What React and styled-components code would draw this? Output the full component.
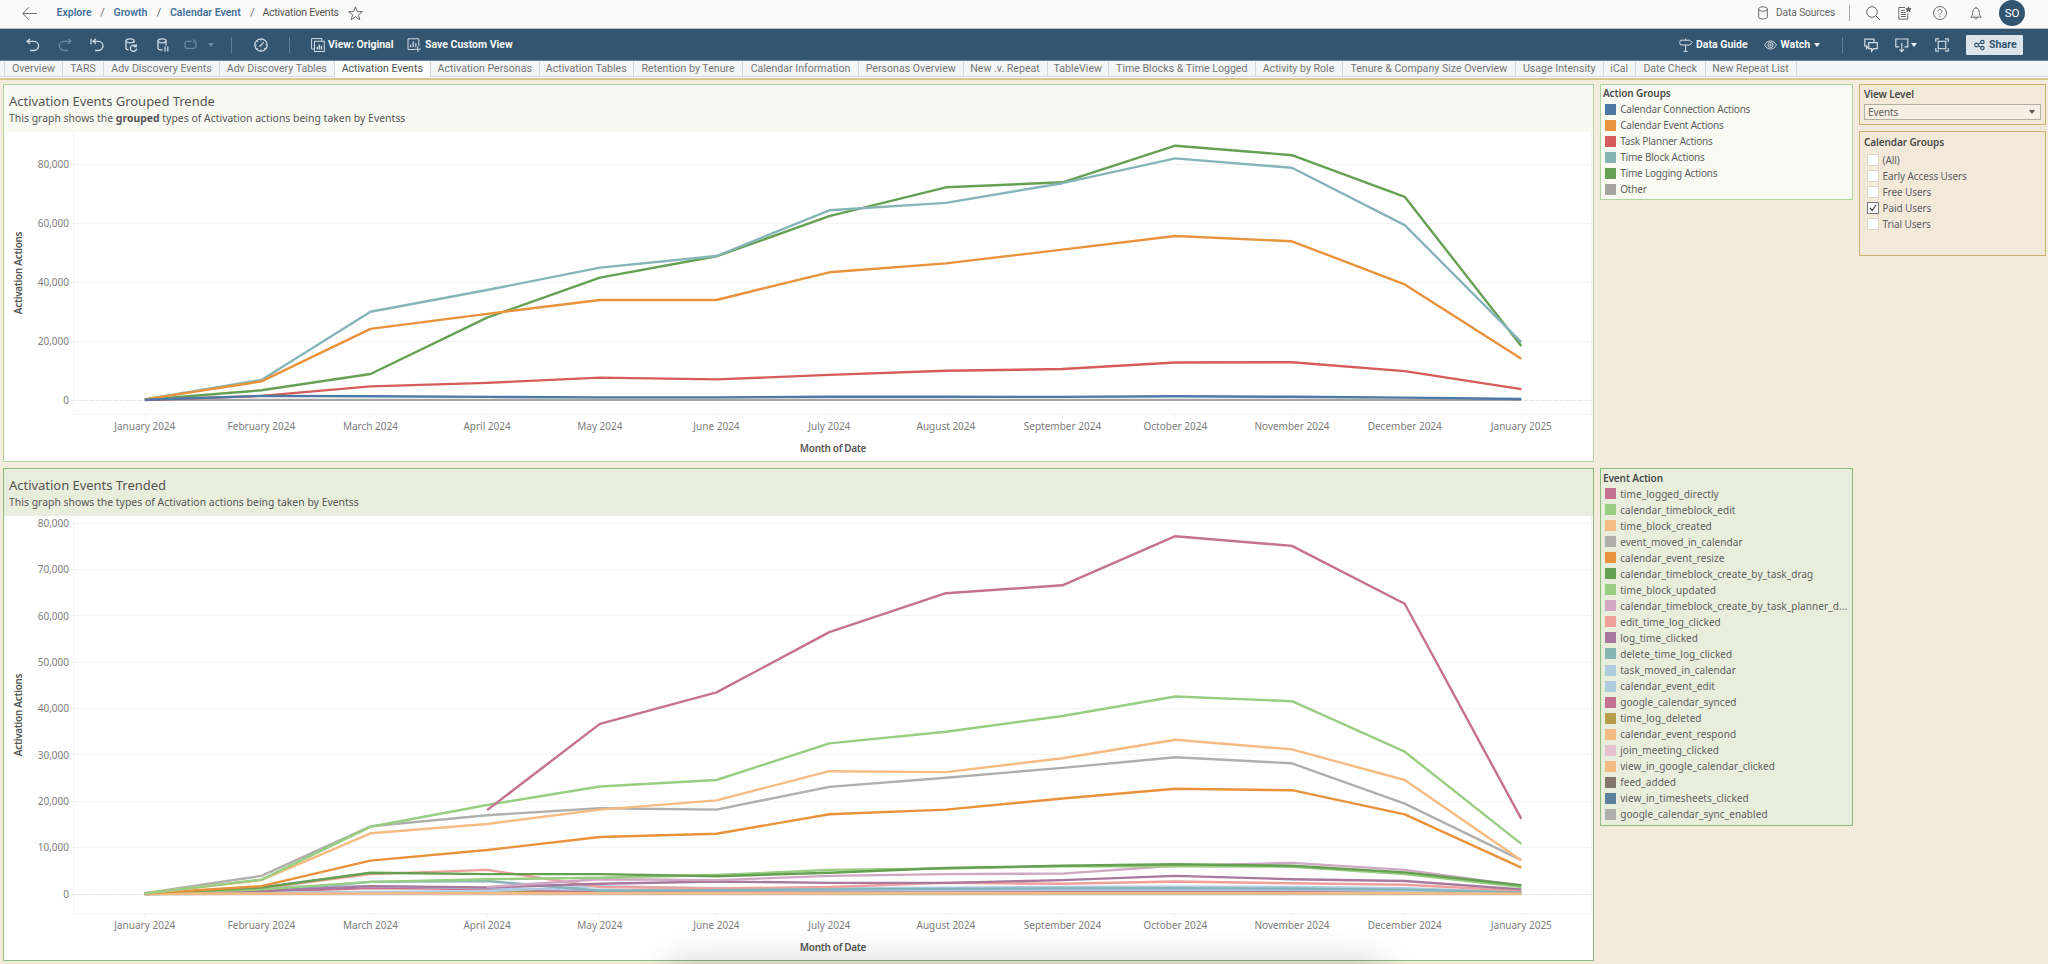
import React from "react";
import styled, { createGlobalStyle } from "styled-components";

const GlobalStyle = createGlobalStyle`
  * { box-sizing: border-box; }
  html, body { margin: 0; padding: 0; overflow: hidden; }
  body { font-family: Roboto, "Liberation Sans", sans-serif; font-size: 10px; color: #4c4c4c; }
`;

const BOOK = '"Noto Sans", "Open Sans", sans-serif';

const Page = styled.div`
  position: relative;
  width: 2048px;
  height: 964px;
  overflow: hidden;
  display: flex;
  flex-direction: column;
  background: #f3ecdd;
`;

/* ---------- top bar ---------- */
const TopBar = styled.header`
  flex: none;
  height: 29px;
  display: flex;
  align-items: center;
  padding: 0 23px 2px 22px;
  background: #fafafa;
  border-bottom: 1px solid #b3c2cd;
`;

const Glyph = styled.svg`
  flex: none;
  display: block;
  overflow: visible;
  width: ${(p) => p.$w || 14}px;
  height: 14px;
  margin-left: ${(p) => p.$ml || 0}px;
  fill: none;
  stroke: ${(p) => p.$color || "#6b6b6b"};
  stroke-width: ${(p) => p.$sw || 1}px;
`;

const Crumb = styled.span`
  flex: none;
  width: ${(p) => p.$w}px;
  margin-left: ${(p) => p.$ml}px;
  font-size: 10.5px;
  letter-spacing: ${(p) => p.$ls || 0}px;
  line-height: 14px;
  white-space: nowrap;
  font-weight: ${(p) => (p.$current ? 400 : 600)};
  color: ${(p) => (p.$current ? "#545454" : "#44709b")};
`;

const Slash = styled.span`
  flex: none;
  width: 5px;
  margin-left: 8px;
  line-height: 14px;
  font-size: 11px;
  text-align: center;
  color: #666;
`;

const Spacer = styled.div`
  flex: 1;
`;

const TopText = styled.span`
  flex: none;
  width: 59px;
  margin-left: 8px;
  font-size: 10.2px;
  letter-spacing: -0.1px;
  line-height: 14px;
  white-space: nowrap;
  color: #666;
`;

const Rule = styled.i`
  flex: none;
  width: 1px;
  height: 16px;
  margin-left: ${(p) => p.$ml}px;
  background: ${(p) => p.$color};
`;

const Avatar = styled.div`
  flex: none;
  width: 26px;
  height: 26px;
  margin-left: 17px;
  border-radius: 50%;
  background: #345570;
  color: #fff;
  font-size: 11.5px;
  line-height: 27px;
  text-align: center;
`;

/* ---------- toolbar ---------- */
const Toolbar = styled.nav`
  flex: none;
  height: 32px;
  display: flex;
  align-items: center;
  padding: 0 25px 0 26px;
  background: #345570;
  border-bottom: 1px solid #6f8799;
`;

const ToolLabel = styled.span`
  flex: none;
  width: ${(p) => p.$w}px;
  margin-left: ${(p) => p.$ml}px;
  font-size: 10.5px;
  font-weight: 700;
  letter-spacing: ${(p) => p.$ls || 0}px;
  line-height: 14px;
  white-space: nowrap;
  color: #f4f7f9;
`;

const Caret = styled.i`
  flex: none;
  width: 0;
  height: 0;
  margin-left: ${(p) => p.$ml}px;
  border-left: 3px solid transparent;
  border-right: 3px solid transparent;
  border-top: 4px solid ${(p) => p.$color};
`;

const ShareButton = styled.button`
  flex: none;
  display: flex;
  align-items: center;
  width: 57px;
  height: 20px;
  margin-left: 17px;
  padding: 0 0 0 8px;
  border: 0;
  border-radius: 1px;
  background: #dde4ea;
  color: #345570;
  font: 700 10.6px/20px Roboto, sans-serif;
  gap: 4px;
`;

/* ---------- sheet tabs ---------- */
const Tabs = styled.div`
  flex: none;
  display: flex;
  height: 17px;
  padding-left: 4px;
  background: linear-gradient(#f3f5f6 0 15px, #d5dadf 15px 16px, #ffffff 16px);
`;

const Tab = styled.div`
  flex: none;
  width: ${(p) => p.$w}px;
  height: ${(p) => (p.$active ? 17 : 15)}px;
  border-left: 1px solid #d3d8dd;
  background: ${(p) => (p.$active ? "#ffffff" : "transparent")};
  color: ${(p) => (p.$active ? "#4f4f4f" : "#777")};
  font-size: 10.6px;
  line-height: 16px;
  text-align: center;
  white-space: nowrap;
`;

const TabsEnd = styled.i`
  width: 1px;
  height: 15px;
  background: #d3d8dd;
`;

/* ---------- dashboard ---------- */
const Dashboard = styled.main`
  flex: 1;
  display: grid;
  grid-template-columns: 1591px 253px 187px;
  column-gap: 6px;
  padding: 4px 0 0 3px;
  border-top: 2px solid #d9c489;
`;

const Column = styled.div`
  display: flex;
  flex-direction: column;
  gap: ${(p) => p.$gap}px;
`;

const tones = {
  light: { border: "#afd69e", head: "#f8f9f1", fill: "#f9fbf3" },
  deep: { border: "#88bd7c", head: "#e9eddc", fill: "#e9eddc" },
  sand: { border: "#cbb36f", head: "#f3e9d9", fill: "#f3e9d9" },
};

const Panel = styled.section`
  height: ${(p) => p.$h}px;
  border: 1px solid ${(p) => tones[p.$tone].border};
  background: #fff;
`;

const PanelHead = styled.div`
  height: 47px;
  padding: 8px 0 0 5px;
  background: ${(p) => tones[p.$tone].head};
  font-family: ${BOOK};
  color: #555;
`;

const PanelTitle = styled.div`
  font-size: 13px;
  letter-spacing: -0.03px;
  line-height: 17px;
`;

const PanelSub = styled.div`
  font-size: 10.4px;
  letter-spacing: 0.02px;
  line-height: 16px;
`;

const Plot = styled.svg`
  display: block;
  font-family: ${BOOK};
`;

const AxisLabel = styled.text`
  font-size: 10px;
  fill: #7d7d7d;
`;

const AxisTitle = styled.text`
  font-size: 10px;
  font-weight: 600;
  letter-spacing: -0.32px;
  fill: #555;
`;

const Box = styled.section`
  height: ${(p) => p.$h}px;
  margin-top: ${(p) => p.$mt || 0}px;
  padding: ${(p) => p.$pad};
  border: 1px solid ${(p) => tones[p.$tone].border};
  background: ${(p) => tones[p.$tone].fill};
  font-family: ${BOOK};
  font-size: 10px;
  letter-spacing: ${(p) => p.$ls || 0}px;
  color: #5f5f5f;
`;

const BoxTitle = styled.div`
  height: ${(p) => p.$h || 16}px;
  line-height: 16px;
  font-weight: 600;
  letter-spacing: -0.1px;
  color: #4a4a4a;
`;

const LegendRow = styled.div`
  display: flex;
  align-items: center;
  gap: 4.2px;
  height: 16.05px;
  padding-left: 2px;
  white-space: nowrap;
`;

const Swatch = styled.i`
  flex: none;
  width: 11px;
  height: 11px;
  background: ${(p) => p.$color};
`;

const Select = styled.div`
  display: flex;
  align-items: center;
  justify-content: space-between;
  height: 16px;
  margin-top: 2px;
  padding: 0 5px 0 3px;
  border: 1px solid #b5b0a6;
  background: #f7efe3;
`;

const CheckRow = styled.label`
  display: flex;
  align-items: center;
  gap: 4px;
  height: 16px;
  padding-left: 2.5px;
`;

const Check = styled.span`
  flex: none;
  width: 12px;
  height: 12px;
  border: 1px solid ${(p) => (p.$on ? "#777" : "#dcd6cc")};
  background: #fff;
`;

const CheckMark = styled.svg`
  display: block;
  width: 10px;
  height: 10px;
  fill: none;
  stroke: #444;
  stroke-width: 1.2px;
`;

const DockShadow = styled.div`
  position: absolute;
  left: 672px;
  top: 970px;
  width: 708px;
  height: 30px;
  border-radius: 14px;
  box-shadow: 0 0 34px 6px rgba(0, 0, 0, 0.22);
`;

/* ---------- data ---------- */
const TABS = [
  ["Overview", 58], ["TARS", 41], ["Adv Discovery Events", 116], ["Adv Discovery Tables", 114.5],
  ["Activation Events", 96.5], ["Activation Personas", 108.5], ["Activation Tables", 94.5],
  ["Retention by Tenure", 109], ["Calendar Information", 116], ["Personas Overview", 104.5],
  ["New .v. Repeat", 84], ["TableView", 61.5], ["Time Blocks & Time Logged", 146.5],
  ["Activity by Role", 87], ["Tenure & Company Size Overview", 173.5], ["Usage Intensity", 87.5],
  ["iCal", 32.5], ["Date Check", 69.5], ["New Repeat List", 91],
];

const MONTHS = [
  ["January 2024", 0], ["February 2024", 31], ["March 2024", 60], ["April 2024", 91],
  ["May 2024", 121], ["June 2024", 152], ["July 2024", 182], ["August 2024", 213],
  ["September 2024", 244], ["October 2024", 274], ["November 2024", 305],
  ["December 2024", 335], ["January 2025", 366],
];

const GROUPS = [
  ["Calendar Connection Actions", "#4e79a7"],
  ["Calendar Event Actions", "#e8923c"],
  ["Task Planner Actions", "#d65b5b"],
  ["Time Block Actions", "#86b5b3"],
  ["Time Logging Actions", "#66a053"],
  ["Other", "#a5a4a0"],
];

const GROUP_SERIES = [
  { color: "#a5a4a0", v: [150, 150, 150, 150, 150, 150, 150, 150, 150, 150, 150, 150, 150] },
  { color: "#66a053", v: [200, 3400, 8900, 28000, 41600, 48800, 62400, 72200, 73900, 86300, 83100, 69000, 18400] },
  { color: "#86b5b9", v: [300, 6900, 30000, 37400, 45000, 48900, 64400, 66900, 73600, 82000, 78800, 59400, 19700] },
  { color: "#d65b5b", v: [100, 1500, 4700, 5900, 7700, 7100, 8600, 10000, 10600, 12800, 12900, 9900, 3800] },
  { color: "#e8923c", v: [300, 6400, 24200, 29300, 34000, 34000, 43400, 46400, 51100, 55700, 53900, 39300, 14100] },
  { color: "#4e79a7", v: [200, 1500, 1400, 1150, 1000, 1000, 1200, 1200, 1150, 1400, 1200, 900, 450] },
];

const EVENTS = [
  ["time_logged_directly", "#c57191"],
  ["calendar_timeblock_edit", "#98cd82"],
  ["time_block_created", "#f5bb82"],
  ["event_moved_in_calendar", "#b0afab"],
  ["calendar_event_resize", "#e8923c"],
  ["calendar_timeblock_create_by_task_drag", "#659f51"],
  ["time_block_updated", "#98cd82"],
  ["calendar_timeblock_create_by_task_planner_d...", "#d0a8c3"],
  ["edit_time_log_clicked", "#f0a09b"],
  ["log_time_clicked", "#a8789f"],
  ["delete_time_log_clicked", "#86b5b3"],
  ["task_moved_in_calendar", "#aecbe0"],
  ["calendar_event_edit", "#aecbe0"],
  ["google_calendar_synced", "#c57191"],
  ["time_log_deleted", "#b69d4b"],
  ["calendar_event_respond", "#f5bb82"],
  ["join_meeting_clicked", "#e6c1d0"],
  ["view_in_google_calendar_clicked", "#f2bb84"],
  ["feed_added", "#85766c"],
  ["view_in_timesheets_clicked", "#5c829b"],
  ["google_calendar_sync_enabled", "#b0afab"],
];

const EVENT_SERIES = [
  { color: "#b0afab", v: [0, 0, 0, 0, 0, 0, 0, 0, 0, 0, 0, 0, 0] },
  { color: "#e6c1d0", v: [0, 50, 100, 150, 200, 200, 250, 250, 300, 300, 300, 250, 50] },
  { color: "#b69d4b", v: [0, 100, 250, 450, 500, 400, 400, 400, 450, 500, 450, 400, 100] },
  { color: "#c57191", v: [0, 450, 1300, 1050, 500, 500, 500, 500, 550, 600, 600, 450, 150] },
  { color: "#aecbe0", v: [50, 400, 450, 600, 1700, 1250, 1250, 1350, 1500, 1600, 1500, 1250, 400] },
  { color: "#aecbe0", v: [50, 1500, 1700, 1200, 900, 800, 800, 800, 900, 900, 900, 700, 200] },
  { color: "#f0a09b", v: [0, 1200, 4300, 5200, 1500, 1200, 1500, 2400, 2200, 2700, 2300, 2000, 700] },
  { color: "#86b5b9", v: [0, 600, 2600, 2800, 700, 850, 1000, 1100, 1200, 1250, 1150, 950, 350] },
  { color: "#a8789f", v: [50, 600, 1700, 1400, 2200, 2700, 2400, 2400, 3000, 3900, 3200, 2800, 1000] },
  { color: "#d0a8c3", v: [null, null, null, 1500, 3200, 3000, 3900, 4300, 4400, 6100, 6700, 5200, 1800] },
  { color: "#98cd82", v: [50, 1000, 2600, 3200, 3500, 4100, 5200, 5500, 6000, 6000, 5900, 4300, 1500] },
  { color: "#659f51", v: [50, 1400, 4600, 4300, 4300, 3850, 4600, 5600, 6100, 6400, 6100, 4650, 1900] },
  { color: "#f5bb82", v: [50, 100, 120, 150, 150, 150, 150, 150, 150, 180, 180, 150, 50] },
  { color: "#e8923c", v: [100, 1700, 7200, 9500, 12300, 13000, 17200, 18200, 20600, 22700, 22400, 17200, 5700] },
  { color: "#b0afab", v: [200, 3900, 14600, 17000, 18500, 18200, 23100, 25100, 27200, 29500, 28200, 19500, 7300] },
  { color: "#f5bb82", v: [100, 3000, 13100, 15100, 18200, 20200, 26500, 26300, 29300, 33300, 31200, 24600, 7300] },
  { color: "#98cd82", v: [100, 3100, 14500, 19200, 23200, 24600, 32500, 35000, 38400, 42600, 41600, 30700, 10800] },
  { color: "#c57191", v: [null, null, null, 18100, 36700, 43500, 56500, 64900, 66600, 77200, 75100, 62600, 16200] },
];

const USERS = ["(All)", "Early Access Users", "Free Users", "Paid Users", "Trial Users"];

/* ---------- chart ---------- */
const PLOT_LEFT = 70;
const PLOT_RIGHT = 1588;
const monthX = (day) => 140.8 + day * 3.761;

function TrendChart({ height, zeroY, perThousand, step, axisY, titleX = 829, midY, series }) {
  const y = (v) => zeroY - (v / 1000) * perThousand;
  const ticks = [];
  for (let t = 0; t <= 80000; t += step) ticks.push(t);
  return (
    <Plot width="1589" height={height}>
      <g stroke="#f4f4f4">
        {ticks.slice(1).map((t) => (
          <line key={t} x1={PLOT_LEFT - 3} x2={PLOT_RIGHT} y1={Math.floor(y(t)) + 0.5} y2={Math.floor(y(t)) + 0.5} />
        ))}
        <line x1={PLOT_LEFT - 0.5} x2={PLOT_LEFT - 0.5} y1="0" y2={axisY} />
        <line x1={PLOT_RIGHT - 0.5} x2={PLOT_RIGHT - 0.5} y1="0" y2={axisY} />
        <line x1={PLOT_LEFT} x2={PLOT_RIGHT} y1={axisY} y2={axisY} />
      </g>
      <line x1={PLOT_LEFT - 3} x2={PLOT_RIGHT} y1={Math.floor(zeroY) + 0.5} y2={Math.floor(zeroY) + 0.5} stroke="#e6e6e6" strokeDasharray="5 1" />
      {ticks.map((t) => (
        <AxisLabel key={t} x={65} y={y(t) + 3.6} textAnchor="end">{t.toLocaleString("en-US")}</AxisLabel>
      ))}
      {MONTHS.map(([name, day]) => (
        <g key={name}>
          <line x1={monthX(day)} x2={monthX(day)} y1={axisY} y2={axisY + 3} stroke="#eeeeee" />
          <AxisLabel x={monthX(day)} y={axisY + 15.9} textAnchor="middle">{name}</AxisLabel>
        </g>
      ))}
      {series.map((s, i) => (
        <polyline
          key={i}
          fill="none"
          stroke={s.color}
          strokeWidth="2.4"
          strokeLinejoin="round"
          points={s.v
            .map((v, m) => (v === null ? null : `${monthX(MONTHS[m][1]).toFixed(1)},${y(v).toFixed(1)}`))
            .filter(Boolean)
            .join(" ")}
        />
      ))}
      <AxisTitle x={titleX} y={axisY + 37.6} textAnchor="middle">Month of Date</AxisTitle>
      <AxisTitle transform={`translate(18.4 ${midY}) rotate(-90)`} textAnchor="middle">Activation Actions</AxisTitle>
    </Plot>
  );
}

/* ---------- icons ---------- */
const PALE = "#d0dbe3";
const DIM = "#6a8aa2";

const BackIcon = () => (
  <Glyph $w={15}><path d="M15 7.5H.8M7 1.2L.8 7.5 7 13.8" /></Glyph>
);
const StarIcon = () => (
  <Glyph $w={15} $ml={9.5}><path d="M7.5.8l1.8 4.7 5.1.2-4 3.1 1.4 4.9-4.3-2.9-4.3 2.9 1.4-4.9-4-3.1 5.1-.2z" /></Glyph>
);
const UndoIcon = () => (
  <Glyph $w={14} $color={PALE} $sw={1.3}><path d="M4 1L1 3.3 4 5.8M1.2 3.3H8a4.6 4.6 0 0 1 0 9.2H4" /></Glyph>
);
const RedoIcon = () => (
  <Glyph $w={14} $ml={18} $color={DIM} $sw={1.3}><path d="M10 1l3 2.3-3 2.5M12.8 3.3H6a4.6 4.6 0 0 0 0 9.2h4" /></Glyph>
);
const RevertIcon = () => (
  <Glyph $w={14} $ml={18} $color={PALE} $sw={1.3}><path d="M1 .8v5.4M6 1L3 3.3 6 5.800M3.200 3.300h5.200a4.600 4.600 0 0 1 0 9.200H5" /></Glyph>
);
const RefreshDataIcon = () => (
  <Glyph $w={12} $ml={20.5} $color={PALE} $sw={1.3}>
    <ellipse cx="5" cy="2.800" rx="4" ry="2" />
    <path d="M1 2.800v7.400c0 .9 1 1.400 2.500 1.600M9 2.800v2.200M10.900 8.300a3.100 3.100 0 1 0 .7 2.200M8.600 8.500h2.600V6" />
  </Glyph>
);
const PauseDataIcon = () => (
  <Glyph $w={12} $ml={20} $color={PALE} $sw={1.3}>
    <ellipse cx="5" cy="2.800" rx="4" ry="2" />
    <path d="M1 2.800v7.400c0 1.100 1.800 1.700 4.500 1.700M9 2.800v4.600M8 8.600v5M10.800 8.600v5" />
  </Glyph>
);
const AutoIcon = () => (
  <Glyph $w={13} $ml={15} $color={DIM} $sw={1.2}>
    <path d="M7.500 3.300H3A2 2 0 0 0 1 5.300v3a2 2 0 0 0 2 2h7a2 2 0 0 0 2-2V4M9 1.500l2.200 1.800L9 5.100" />
  </Glyph>
);
const GaugeIcon = () => (
  <Glyph $w={14} $ml={22} $color={PALE} $sw={1.2}>
    <circle cx="7" cy="7" r="6.200" />
    <path d="M6.300 8l3.400-3.800M5.200 7.800h2.300M7 1v1.600M1 7h1.600M13 7h-1.600M2.800 2.800l1 1M7 13v-1.400M2.800 11.200l1-1M11.200 11.200l-1-1" />
  </Glyph>
);
const ViewIcon = () => (
  <Glyph $w={14} $ml={21} $color={PALE}>
    <path d="M3.500 11H.6V.6h10.200v2.700" />
    <rect x="3.500" y="3.300" width="9.800" height="10.200" />
    <path d="M6.400 11.500V8.800M8.400 11.500v-5M10.500 11.500V8" strokeWidth="1.400" />
  </Glyph>
);
const SaveViewIcon = () => (
  <Glyph $w={14} $ml={15} $color={PALE}>
    <path d="M8 11.500H1V.8h10.800V8M10.800 8.500v5.400M8.100 11.200h5.600" />
    <path d="M3.600 9.200V6.600M6.200 9.200V3.600M8.800 9.200V5.200" strokeWidth="1.200" />
  </Glyph>
);
const GuideIcon = () => (
  <Glyph $w={14} $color={PALE}>
    <path d="M1.500 2.200h9.300l2.400 2.400-2.400 2.400H1.500L.6 4.600zM6.600.6v1.600M6.600 7v6.400M4.600 13.400h4" />
  </Glyph>
);
const EyeIcon = () => (
  <Glyph $w={13} $ml={15} $color={PALE}>
    <path d="M.6 7C2 4.400 4 3 6.500 3s4.500 1.400 5.900 4C11 9.600 9 11 6.500 11S2 9.600.6 7z" />
    <circle cx="6.500" cy="7" r="2.600" />
    <circle cx="6.500" cy="7" r=".8" />
  </Glyph>
);
const CommentsIcon = () => (
  <Glyph $w={14} $ml={21.5} $color={PALE} $sw={1.2}>
    <path d="M4.600 8.500L2.600 10.400V7.800H.8V1.100h9.200v3" />
    <path d="M4.700 4.600h8.600v6H9.600l-2 2.600v-2.600H4.700z" />
  </Glyph>
);
const DownloadIcon = () => (
  <Glyph $w={14} $ml={16.5} $color={PALE} $sw={1.2}>
    <path d="M4.200 8.800H.8V1h12v7.800H9.500M6.800 5v8.500M4.600 11.300l2.200 2.400L9 11.300" />
  </Glyph>
);
const FullScreenIcon = () => (
  <Glyph $w={14} $ml={18} $color={PALE} $sw={1.2}>
    <path d="M.8 4V.8H4M10 .8h3.200V4M13.200 10v3.200H10M4 13.200H.8V10" />
    <rect x="3.300" y="3.300" width="7.400" height="7.400" />
  </Glyph>
);
const ShareIcon = () => (
  <Glyph $w={11} $color="#345570" $sw={1.2}>
    <circle cx="2.500" cy="7" r="1.800" /><circle cx="8.400" cy="4" r="1.700" /><circle cx="8.400" cy="10" r="1.700" />
    <path d="M4.100 6.200l2.800-1.400M4.100 7.800l2.800 1.400" />
  </Glyph>
);
const SourceIcon = () => (
  <Glyph $w={10}><ellipse cx="5" cy="3" rx="4.300" ry="2.100" /><path d="M.7 3v8c0 1.200 1.900 2 4.300 2s4.300-.8 4.300-2V3" /></Glyph>
);
const SearchIcon = () => (
  <Glyph $w={14} $ml={16}><circle cx="6" cy="6" r="5.300" /><path d="M9.800 9.800l4.200 4.200" /></Glyph>
);
const FavoritesIcon = () => (
  <Glyph $w={13} $ml={18}>
    <path d="M7 1.500H.8v11.700h9V7.500M2.800 4.500h4M2.800 6.500h5M2.800 8.500h5M2.800 10.500h5" />
    <path d="M10.500.8l.7 1.800 1.900.1-1.500 1.200.5 1.900-1.600-1.100-1.600 1.100.5-1.900-1.500-1.200 1.900-.1z" fill="#555" />
  </Glyph>
);
const HelpIcon = () => (
  <Glyph $w={14} $ml={22}>
    <circle cx="7" cy="7" r="6.500" />
    <path d="M5 5.600C5 4.300 5.900 3.500 7 3.500s2 .8 2 1.900C9 6.900 7 7 7 8.500M7 9.800v1.200" />
  </Glyph>
);
const BellIcon = () => (
  <Glyph $w={12} $ml={23}>
    <path d="M.8 11.200c1.700-1.300 1.700-2.700 1.900-5C2.900 3.600 4.200 2 6 2s3.100 1.600 3.300 4.200c.2 2.300.2 3.700 1.900 5zM6 2V.8M4.700 11.500c0 .9.500 1.500 1.300 1.500s1.300-.6 1.300-1.500" />
  </Glyph>
);

export default function App() {
  return (
    <>
      <GlobalStyle />
      <Page>
        <TopBar>
          <BackIcon />
          <Crumb $w={35.5} $ml={19.5}>Explore</Crumb>
          <Slash>/</Slash>
          <Crumb $w={35} $ml={8.5}>Growth</Crumb>
          <Slash>/</Slash>
          <Crumb $w={72} $ml={8.5}>Calendar Event</Crumb>
          <Slash>/</Slash>
          <Crumb $w={76} $ml={7.5} $ls={-0.25} $current>Activation Events</Crumb>
          <StarIcon />
          <Spacer />
          <SourceIcon />
          <TopText>Data Sources</TopText>
          <Rule $ml={14} $color="#a9a9a9" />
          <SearchIcon />
          <FavoritesIcon />
          <HelpIcon />
          <BellIcon />
          <Avatar>SO</Avatar>
        </TopBar>

        <Toolbar>
          <UndoIcon />
          <RedoIcon />
          <RevertIcon />
          <RefreshDataIcon />
          <PauseDataIcon />
          <AutoIcon />
          <Caret $ml={11} $color={DIM} />
          <Rule $ml={17} $color="#5f7f97" />
          <GaugeIcon />
          <Rule $ml={21} $color="#5f7f97" />
          <ViewIcon />
          <ToolLabel $w={64} $ml={3.5}>View: Original</ToolLabel>
          <SaveViewIcon />
          <ToolLabel $w={87} $ml={4}>Save Custom View</ToolLabel>
          <Spacer />
          <GuideIcon />
          <ToolLabel $w={53} $ml={3}>Data Guide</ToolLabel>
          <EyeIcon />
          <ToolLabel $w={30} $ml={3.5}>Watch</ToolLabel>
          <Caret $ml={3} $color="#f4f7f9" />
          <Rule $ml={22} $color="#5f7f97" />
          <CommentsIcon />
          <DownloadIcon />
          <Caret $ml={2.5} $color="#f4f7f9" />
          <FullScreenIcon />
          <ShareButton><ShareIcon />Share</ShareButton>
        </Toolbar>

        <Tabs>
          {TABS.map(([name, w]) => (
            <Tab key={name} $w={w} $active={name === "Activation Events"}>{name}</Tab>
          ))}
          <TabsEnd />
        </Tabs>

        <Dashboard>
          <Column $gap={6}>
            <Panel $tone="light" $h={378}>
              <PanelHead $tone="light">
                <PanelTitle>Activation Events Grouped Trende</PanelTitle>
                <PanelSub>This graph shows the <b>grouped</b> types of Activation actions being taken by Eventss</PanelSub>
              </PanelHead>
              <TrendChart height={329} zeroY={268.3} perThousand={2.95} step={20000} axisY={282.5} midY={141} series={GROUP_SERIES} />
            </Panel>
            <Panel $tone="deep" $h={493}>
              <PanelHead $tone="deep">
                <PanelTitle>Activation Events Trended</PanelTitle>
                <PanelSub>This graph shows the types of Activation actions being taken by Eventss</PanelSub>
              </PanelHead>
              <TrendChart height={444} zeroY={378} perThousand={4.635} step={10000} axisY={397.5} midY={199} series={EVENT_SERIES} />
            </Panel>
          </Column>

          <Column $gap={0}>
            <Box $tone="light" $h={116} $pad="0 0 0 2px" $ls={-0.2}>
              <BoxTitle>Action Groups</BoxTitle>
              {GROUPS.map(([name, color]) => (
                <LegendRow key={name}><Swatch $color={color} />{name}</LegendRow>
              ))}
            </Box>
            <Box $tone="deep" $h={358} $mt={268} $pad="0.5px 0 0 2px" $ls={0.07}>
              <BoxTitle>Event Action</BoxTitle>
              {EVENTS.map(([name, color]) => (
                <LegendRow key={name}><Swatch $color={color} />{name}</LegendRow>
              ))}
            </Box>
          </Column>

          <Column $gap={6}>
            <Box $tone="sand" $h={41} $pad="1px 4px 0 4px" $ls={-0.1}>
              <BoxTitle>View Level</BoxTitle>
              <Select>Events<Caret $ml={0} $color="#555" /></Select>
            </Box>
            <Box $tone="sand" $h={125} $pad="2px 4px 0 4px" $ls={-0.1}>
              <BoxTitle $h={17.5}>Calendar Groups</BoxTitle>
              {USERS.map((name) => (
                <CheckRow key={name}>
                  <Check $on={name === "Paid Users"}>
                    {name === "Paid Users" && <CheckMark><path d="M2 5l2.200 2.500L8 2" /></CheckMark>}
                  </Check>
                  {name}
                </CheckRow>
              ))}
            </Box>
          </Column>
        </Dashboard>
        <DockShadow />
      </Page>
    </>
  );
}
